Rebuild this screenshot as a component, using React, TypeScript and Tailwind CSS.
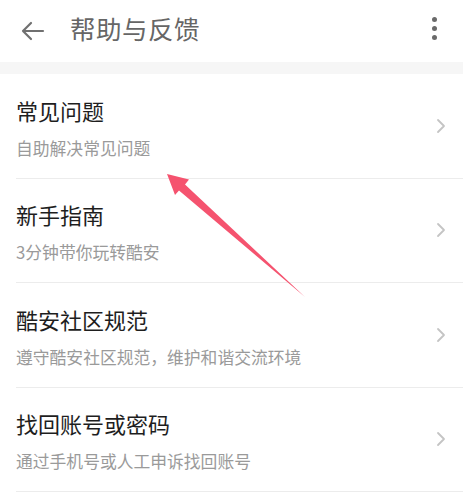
import React from "react";

const items = [
  { title: "常见问题", sub: "自助解决常见问题" },
  { title: "新手指南", sub: "3分钟带你玩转酷安" },
  { title: "酷安社区规范", sub: "遵守酷安社区规范，维护和谐交流环境" },
  { title: "找回账号或密码", sub: "通过手机号或人工申诉找回账号" },
];

export default function App() {
  return (
    <div
      className="relative w-[463px] h-[495px] overflow-hidden bg-white"
      style={{ fontFamily: '"Noto Sans CJK SC", "Noto Sans", sans-serif' }}
    >
      <div className="h-[62px] flex items-center">
        <div className="w-[70px] flex items-center pl-[21px]">
          <svg width="24" height="20" viewBox="0 0 24 20" fill="none">
            <path d="M2 10 H22 M10 2 L2 10 L10 18" stroke="#707070" strokeWidth="2.2" strokeLinecap="round" strokeLinejoin="round" />
          </svg>
        </div>
        <div className="flex-1 text-[25.5px] leading-none text-[#666] tracking-[0.5px] -mt-[6px]">帮助与反馈</div>
        <div className="w-[60px] flex flex-col items-center gap-[4px] pl-[2px] -mt-[6px]">
          <span className="w-[5px] h-[5px] rounded-full bg-[#6a6a6a]" />
          <span className="w-[5px] h-[5px] rounded-full bg-[#6a6a6a]" />
          <span className="w-[5px] h-[5px] rounded-full bg-[#6a6a6a]" />
        </div>
      </div>
      <div className="h-[12px] bg-[#f6f6f6]" />
      <div className="pl-[16px]">
        {items.map((it) => (
          <div key={it.title} className="h-[104.5px] border-b border-[#ececec] flex items-center">
            <div className="flex-1 flex flex-col pt-[3px]">
              <div className="text-[22px] leading-[28px] text-[#1e1e1e]">{it.title}</div>
              <div className="text-[16.8px] leading-[22px] text-[#9a9a9a] mt-[13px]">{it.sub}</div>
            </div>
            <div className="w-[40px] flex justify-center pr-[4px]">
              <svg width="10" height="16" viewBox="0 0 10 16" fill="none">
                <path d="M2 2 L8 8 L2 14" stroke="#c4c4c4" strokeWidth="1.8" strokeLinecap="round" strokeLinejoin="round" />
              </svg>
            </div>
          </div>
        ))}
      </div>
      <svg className="absolute left-0 top-0 pointer-events-none" width="463" height="495" viewBox="0 0 463 495">
        <polygon
          points="167,174 189,179.5 185,184.5 305,297 179,190.5 175,195"
          fill="#f5536f"
        />
      </svg>
    </div>
  );
}
